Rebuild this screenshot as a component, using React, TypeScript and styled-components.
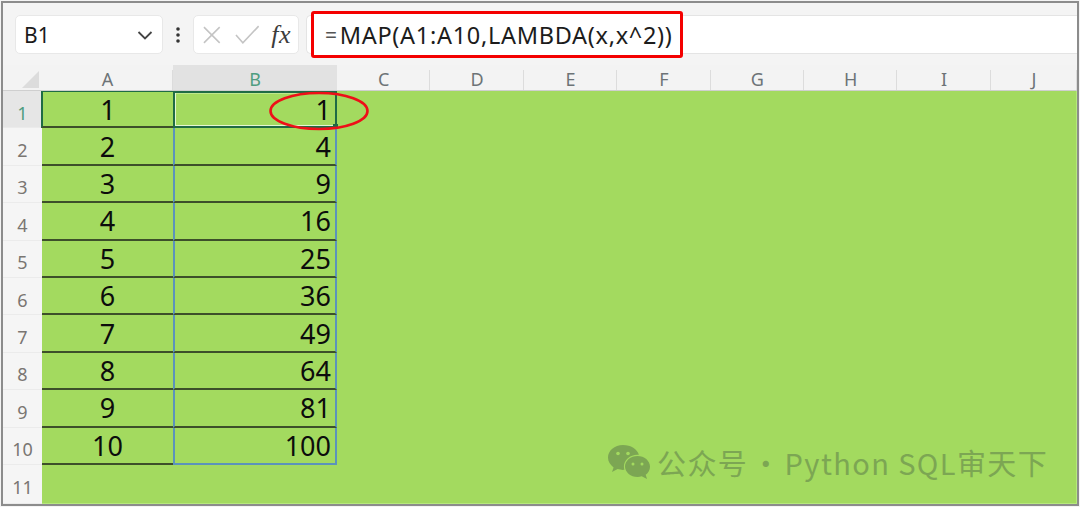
import React from "react";
import styled, { createGlobalStyle } from "styled-components";

const Global = createGlobalStyle`
  html, body { margin: 0; padding: 0; background: #fff; }
  #root { box-sizing: border-box; width: 1080px; height: 507px; padding: 1px; overflow: hidden; background: #f4f4f4; }
`;

const Frame = styled.div`
  position: relative;
  box-sizing: border-box;
  width: 1078px;
  height: 505px;
  border: 2px solid #8c8c8c;
  background: #f3f3f3;
  display: flex;
  flex-direction: column;
  font-family: "Noto Sans", "Liberation Sans", sans-serif;
  overflow: hidden;
`;

const Toolbar = styled.div`
  box-sizing: border-box;
  height: 62px;
  padding: 12px 0 11px 12px;
  display: flex;
  align-items: stretch;
  background: #f4f4f4;
`;

const NameBox = styled.div`
  box-sizing: border-box;
  width: 148px;
  background: #fff;
  border: 1px solid #e8e8e8;
  border-radius: 5px;
  display: flex;
  align-items: center;
  justify-content: space-between;
  padding: 0 7px 0 8px;
  font-size: 21px;
  color: #1a1a1a;
`;

const MoreDots = styled.div`
  width: 30px;
  display: flex;
  align-items: center;
  justify-content: center;
`;

const FxBox = styled.div`
  box-sizing: border-box;
  width: 106px;
  background: #fff;
  border: 1px solid #e8e8e8;
  border-radius: 5px;
  display: flex;
  align-items: center;
  padding: 0 7px 0 7px;
  gap: 12px;
`;

const FxLabel = styled.span`
  font-family: "Liberation Serif", serif;
  font-style: italic;
  font-size: 26px;
  line-height: 1;
  color: #3c3c3c;
  letter-spacing: 0.5px;
`;

const FormulaWrap = styled.div`
  flex: 1;
  margin-left: 7px;
  background: #fff;
  border: 1px solid #e4e4e4;
  border-right: none;
  border-radius: 5px 0 0 5px;
  display: flex;
  align-items: center;
  padding-left: 4px;
`;

const FormulaHighlight = styled.div`
  box-sizing: border-box;
  flex: none;
  width: 372px;
  height: 47px;
  border: 3px solid #f40000;
  border-radius: 3px;
  background: #fff;
  display: flex;
  align-items: center;
  padding-left: 11px;
  font-size: 23.5px;
  letter-spacing: 0.7px;
  color: #1c1c1c;
  white-space: nowrap;
`;

const EqualsSign = styled.span`
  font-size: 21px;
  color: #555;
  margin-right: 2px;
`;

const Sheet = styled.div`
  flex: 1;
  display: grid;
  grid-template-columns: 39px 131px 164px repeat(7, 93.4px) 1fr;
  grid-template-rows: 26px repeat(10, 37.4px) 1fr;
  background: #a3da5f;
  box-shadow: inset -1px -1px 0 #b6e97c;
`;

const Corner = styled.div`
  background: #f3f3f3;
  position: relative;
  border-bottom: 1px solid #cfcfcf;
  &::after {
    content: "";
    position: absolute;
    right: 3px;
    bottom: 2px;
    width: 0;
    height: 0;
    border-left: 17px solid transparent;
    border-bottom: 17px solid #dcdcdc;
  }
`;

const ColHead = styled.div<{ $active?: boolean }>`
  box-sizing: border-box;
  display: flex;
  align-items: center;
  justify-content: center;
  font-size: 18px;
  padding-top: 3px;
  background: ${(p) =>
    p.$active
      ? "#e2e2e2"
      : "linear-gradient(#dcdcdc, #dcdcdc) right bottom / 1px 20px no-repeat #f3f3f3"};
  color: ${(p) => (p.$active ? "#4f9d80" : "#6d7377")};
  border-bottom: 1px solid #cfcfcf;
`;

const RowHead = styled.div<{ $active?: boolean }>`
  box-sizing: border-box;
  display: flex;
  align-items: center;
  justify-content: center;
  padding-top: 7px;
  font-size: 18px;
  background: ${(p) => (p.$active ? "#e6e6e6" : "#f5f5f5")};
  color: ${(p) => (p.$active ? "#4f9d80" : "#7a7672")};
  border-bottom: 1px solid #ebebeb;
  grid-column: 1;
`;

const CellA = styled.div<{ $first?: boolean }>`
  box-sizing: border-box;
  display: flex;
  align-items: center;
  justify-content: center;
  font-size: 27px;
  color: #0c0c0c;
  border-bottom: 2px solid #3d4f2a;
  ${(p) => p.$first && "border-left: 2px solid #1f6b45; border-top: 1px solid #1f6b45; margin-left: -1px;"}
`;

const CellB = styled.div<{ $first?: boolean; $last?: boolean }>`
  box-sizing: border-box;
  position: relative;
  display: flex;
  align-items: center;
  justify-content: flex-end;
  padding-right: 4px;
  font-size: 27px;
  color: #0c0c0c;
  border-left: 2px solid #5b93bb;
  border-right: 2px solid #5b93bb;
  border-bottom: 2px solid ${(p) => (p.$last ? "#5b93bb" : "#3d4f2a")};
  ${(p) =>
    p.$first &&
    `border: 2px solid #1f6b45; box-shadow: inset 1px 0 0 #e4f6d2, inset 0 -1px 0 #e4f6d2, inset 0 1px 0 #bfe88c;
     &::after { content: ""; position: absolute; right: -3px; bottom: -3px; width: 5px; height: 5px; background: #1f6b45; }`}
`;

const Rest = styled.div`
  grid-column: 4 / -1;
  grid-row: 2 / -1;
`;

const Ellipse = styled.svg`
  position: absolute;
  left: 266px;
  top: 86px;
`;

const Watermark = styled.div`
  position: absolute;
  left: 604px;
  top: 438px;
  display: flex;
  align-items: center;
  gap: 6px;
  font-family: "Noto Sans CJK SC", "Noto Sans", sans-serif;
  font-size: 29px;
  letter-spacing: 1.4px;
  color: #7ca653;
  white-space: nowrap;
`;

const Dot = styled.span`
  margin: 0 3px;
`;

const cols = ["C", "D", "E", "F", "G", "H", "I", "J"];
const a = [1, 2, 3, 4, 5, 6, 7, 8, 9, 10];

export default function App() {
  return (
    <>
      <Global />
      <Frame>
        <Toolbar>
          <NameBox>
            B1
            <svg width="20" height="20" viewBox="0 0 20 20" fill="none" stroke="#444" strokeWidth="1.8">
              <path d="M3.5 7 L10 13.5 L16.5 7" />
            </svg>
          </NameBox>
          <MoreDots>
            <svg width="6" height="18" viewBox="0 0 6 18" fill="#333">
              <circle cx="3" cy="3" r="1.8" />
              <circle cx="3" cy="9" r="1.8" />
              <circle cx="3" cy="15" r="1.8" />
            </svg>
          </MoreDots>
          <FxBox>
            <svg width="22" height="22" viewBox="0 0 22 22" fill="none" stroke="#c4c4c4" strokeWidth="1.6">
              <path d="M3 3 L19 19 M19 3 L3 19" />
            </svg>
            <svg width="25" height="20" viewBox="0 0 25 20" fill="none" stroke="#c4c4c4" strokeWidth="1.6">
              <path d="M1 10 L8 18 L24 1" />
            </svg>
            <FxLabel>fx</FxLabel>
          </FxBox>
          <FormulaWrap>
            <FormulaHighlight>
              <EqualsSign>=</EqualsSign>MAP(A1:A10,LAMBDA(x,x^2))
            </FormulaHighlight>
          </FormulaWrap>
        </Toolbar>
        <Sheet>
          <Corner />
          <ColHead>A</ColHead>
          <ColHead $active>B</ColHead>
          {cols.map((c) => (
            <ColHead key={c}>{c}</ColHead>
          ))}
          {a.map((n, i) => (
            <React.Fragment key={n}>
              <RowHead $active={i === 0} style={{ gridRow: i + 2 }}>
                {n}
              </RowHead>
              <CellA $first={i === 0} style={{ gridRow: i + 2 }}>
                {n}
              </CellA>
              <CellB $first={i === 0} $last={i === 9} style={{ gridRow: i + 2 }}>
                {n * n}
              </CellB>
            </React.Fragment>
          ))}
          <RowHead style={{ gridRow: 12 }}>11</RowHead>
          <Rest />
        </Sheet>
        <Ellipse width="104" height="44" viewBox="0 0 104 44" fill="none" stroke="#ee0f18" strokeWidth="2.6">
          <ellipse cx="50" cy="22" rx="48.5" ry="18" />
        </Ellipse>
        <Watermark>
          <svg width="44" height="36" viewBox="0 0 44 36" fill="#7ca653">
            <path d="M16 1C7.5 1 1 6.6 1 13.6c0 4 2.2 7.4 5.6 9.8L5 28l5.6-2.9c1.8.5 3.6.8 5.4.8.5 0 1 0 1.4-.1-.3-1-.5-2.1-.5-3.2 0-6.6 6-11.9 13.5-11.900.5 0 1 0 1.500.1C30.400 5.200 23.800 1 16 1z" />
            <path d="M43 22.400c0-5.800-5.700-10.500-12.500-10.500S18 16.600 18 22.400s5.700 10.500 12.500 10.500c1.500 0 2.900-.2 4.200-.6L40 35l-1.300-4.300c2.600-1.900 4.300-4.900 4.300-8.300z" />
            <circle cx="11" cy="9.500" r="1.800" fill="#a3da5f" />
            <circle cx="21" cy="9.500" r="1.800" fill="#a3da5f" />
            <circle cx="26" cy="20" r="1.500" fill="#a3da5f" />
            <circle cx="35" cy="20" r="1.500" fill="#a3da5f" />
          </svg>
          <span>
            公众号<Dot>·</Dot>Python SQL审天下
          </span>
        </Watermark>
      </Frame>
    </>
  );
}
